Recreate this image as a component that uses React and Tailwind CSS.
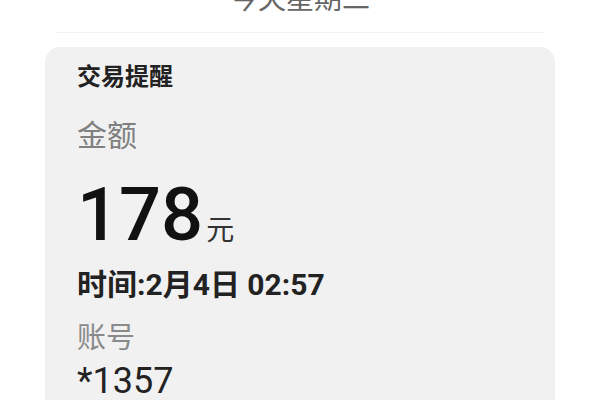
import React from 'react';

const cjk = "font-['Roboto','Noto_Sans_CJK_SC',sans-serif]";

export default function App() {
  return (
    <div className={`w-[600px] h-[400px] overflow-hidden bg-white ${cjk}`}>
      {/* date header, clipped at the top */}
      <div className="h-[33px] mx-[55px] border-b border-[#f3f3f3] overflow-hidden">
        <p className="-mt-[14px] text-center text-[28px] leading-[28px] text-[#666]">今天星期二</p>
      </div>

      {/* transaction card */}
      <div className="mt-[14px] mx-[45px] rounded-[15px] bg-[#f1f1f1] px-[32px] pt-[19px] pb-8">
        <h3 className="text-[24px] leading-[23px] font-bold text-[#222]">交易提醒</h3>

        <p className="mt-[32px] text-[30px] leading-[30px] text-[#808080]">金额</p>

        <div className="mt-[27px] flex items-baseline">
          <span className="text-[74px] leading-[74px] font-medium text-[#111]">178</span>
          <span className="ml-[3px] text-[28px] leading-[28px] text-[#333]">元</span>
        </div>

        <p className="mt-[19px] text-[30px] leading-[28px] font-bold text-[#222]">时间:2月4日 02:57</p>

        <p className="mt-[25px] text-[29px] leading-[29px] text-[#8a8a8a]">账号</p>

        <p className="mt-[10px] text-[36px] leading-[36px] text-[#222]">*1357</p>
      </div>
    </div>
  );
}
